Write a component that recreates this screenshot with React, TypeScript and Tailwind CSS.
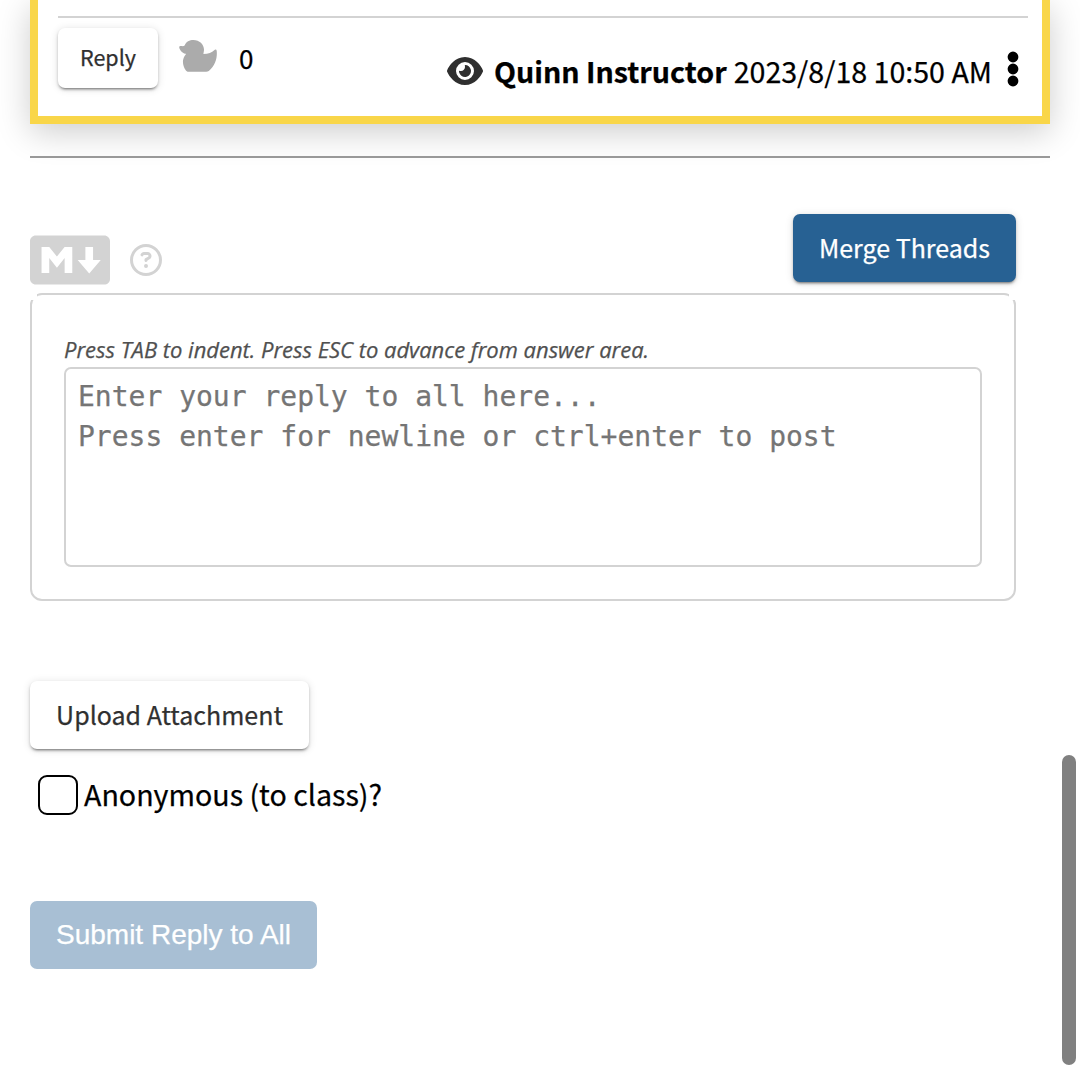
import React from "react";
import { FaMarkdown } from "react-icons/fa";
import { FaEye, FaRegCircleQuestion } from "react-icons/fa6";

const raised = "shadow-[0_3px_2px_-2px_rgba(0,0,0,0.3),0_2px_3px_rgba(0,0,0,0.22),0_1px_8px_rgba(0,0,0,0.12)]";

function Duck() {
  return (
    <svg width="38" height="32" viewBox="0 0 38 32" fill="#ababab" className="block">
      <path d="M0.2 7.2 C0.3 6 1.4 6 2.6 6.1 C4 6.2 5 6.2 5.6 5.4 C7 1.8 10.6 0 14.4 0 C20.4 0 25 4.4 25 9.6 C25 11.4 24.6 12.6 24.4 14 C29.4 14 33 12.6 35.2 10.2 C36.4 9 37.4 9.4 37.7 10.8 C38.4 17 36.8 25.4 29.8 31 C29 31.6 28.2 31.8 27.2 31.8 H9.6 C8.4 31.8 7.6 31.4 6.9 30.5 C4.4 27.4 3.4 22.8 4.2 19.4 C4.8 17 6 15.2 7.2 13.8 C4 13.6 0.6 10.4 0.2 7.2 Z" />
    </svg>
  );
}

export default function App() {
  return (
    <div className="relative h-[1069px] w-[1080px] overflow-hidden bg-white px-[30px] font-['Noto_Sans_CJK_JP',sans-serif] text-black [-webkit-text-stroke:0.25px_currentColor]">
      <section className="h-[124px] border-x-8 border-b-8 border-[#f9d649] px-5 pt-4 shadow-[0_8px_32px_rgba(0,0,0,0.2)]">
        <div className="-mr-1.5 h-0.5 w-[970px] bg-[#d3d3d3]" />
        <div className="flex h-[98px] w-[970px] items-start">
          <button className={`mt-2.5 h-[60px] w-[100px] shrink-0 rounded-[7px] bg-white text-[21.5px] leading-[58px] text-[#303030] ${raised}`}><span className="block h-[60px]">Reply</span></button>
          <div className="mt-[22px] ml-[20.5px]"><Duck /></div>
          <span className="mt-[21px] ml-[22.5px] text-[26px] leading-[38px]">0</span>
          <div className="mt-[33px] ml-auto flex h-10 items-center">
            <FaEye className="mt-[-1px] mr-[11px] h-8 w-9 text-[#2f2f2f]" />
            <b className="mr-[7px] text-[28.6px] leading-10 font-bold whitespace-nowrap">Quinn Instructor</b>
            <span className="text-[28.6px] leading-10 whitespace-nowrap">2023/8/18 10:50 AM</span>
            <svg width="12" height="36" viewBox="0 0 12 36" className="mr-[9px] ml-[15px] -mt-1">
              <circle cx="6" cy="6" r="5.4" />
              <circle cx="6" cy="18" r="5.4" />
              <circle cx="6" cy="30" r="5.4" />
            </svg>
          </div>
        </div>
      </section>
      <div className="mt-8 h-0.5 bg-[#999999]" />

      <main className="w-[986px]">
        <div className="flex h-[135px] items-start">
          <FaMarkdown className="mt-[70px] h-16 w-20 text-[#d3d3d3]" />
          <FaRegCircleQuestion className="mt-[86px] ml-5 size-8 text-[#d3d3d3]" />
          <button className={`mt-14 ml-auto h-[68px] w-[223px] rounded-[7px] bg-[#276193] text-[25px] leading-[66px] text-white ${raised}`}><span className="block h-[68px]">Merge Threads</span></button>
        </div>
        <div className="relative h-[308px] rounded-xl border-2 border-[#d3d3d3] px-8 pt-9">
          <i className="absolute -top-0.5 -left-0.5 h-[7px] w-[7px] bg-white" />
          <i className="absolute -top-0.5 -right-0.5 h-[7px] w-[7px] bg-white" />
          <p className="h-9 font-['Open_Sans',sans-serif] text-[22px] leading-[37px] tracking-[-0.02px] whitespace-nowrap text-[#505050] italic [font-stretch:90%]">
            Press TAB to indent. Press ESC to advance from answer area.
          </p>
          <textarea
            className="block h-[200px] w-[918px] resize-none rounded-[7px] border-2 border-[#d3d3d3] px-3 py-2 font-['DejaVu_Sans_Mono',monospace] text-[28px] leading-10 outline-none placeholder:text-[#757575]"
            placeholder={"Enter your reply to all here...\nPress enter for newline or ctrl+enter to post"}
          />
        </div>
        <button className={`mt-20 block h-[68px] w-[279px] rounded-[7px] bg-white text-[25px] leading-[66px] text-[#303030] ${raised}`}><span className="block h-[68px]">Upload Attachment</span></button>
        <label className="mt-[26px] ml-2 flex h-10 items-center">
          <input type="checkbox" className="size-10 appearance-none rounded-[9px] border-2 border-black bg-white" />
          <span className="mb-0.5 ml-1.5 text-[28.6px] leading-10">Anonymous (to class)?</span>
        </label>
        <button className="mt-[86px] block h-[68px] w-[287px] rounded-[7px] bg-[#a8bfd4] font-['Liberation_Sans',sans-serif] text-[28px] leading-[68px] text-white">Submit Reply to All</button>
      </main>
      <div className="absolute top-[755px] right-1 h-[310px] w-3.5 rounded-full bg-[#808080]" />
    </div>
  );
}
